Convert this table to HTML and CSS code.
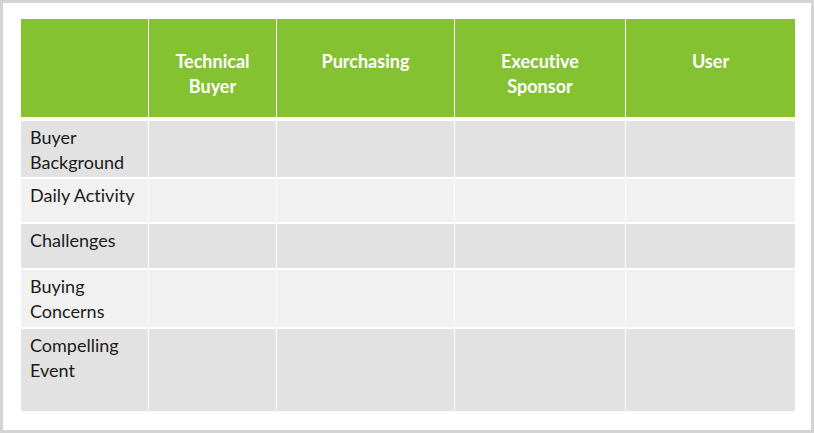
FILE: index.html
```html
<!DOCTYPE html>
<html>
<head>
<meta charset="utf-8">
<link rel="stylesheet" href="styles.css">
</head>
<body>
<div class="frame">
  <div class="table">
    <div class="row head">
      <div class="cell"></div>
      <div class="cell">Technical<br>Buyer</div>
      <div class="cell">Purchasing</div>
      <div class="cell">Executive<br>Sponsor</div>
      <div class="cell">User</div>
    </div>
    <div class="row dark r1">
      <div class="cell label">Buyer<br>Background</div>
      <div class="cell"></div><div class="cell"></div><div class="cell"></div><div class="cell"></div>
    </div>
    <div class="row light r2">
      <div class="cell label">Daily Activity</div>
      <div class="cell"></div><div class="cell"></div><div class="cell"></div><div class="cell"></div>
    </div>
    <div class="row dark r3">
      <div class="cell label">Challenges</div>
      <div class="cell"></div><div class="cell"></div><div class="cell"></div><div class="cell"></div>
    </div>
    <div class="row light r4">
      <div class="cell label">Buying<br>Concerns</div>
      <div class="cell"></div><div class="cell"></div><div class="cell"></div><div class="cell"></div>
    </div>
    <div class="row dark r5">
      <div class="cell label">Compelling<br>Event</div>
      <div class="cell"></div><div class="cell"></div><div class="cell"></div><div class="cell"></div>
    </div>
  </div>
</div>
</body>
</html>
```
FILE: styles.css
```css
html, body {
  margin: 0;
  padding: 0;
  background: #ffffff;
}
.frame {
  box-sizing: border-box;
  width: 814px;
  height: 433px;
  border: 3px solid #d4d4d4;
  padding: 16px 0 0 18px;
  background: #ffffff;
}
.table {
  display: flex;
  flex-direction: column;
  gap: 2px;
  width: 774px;
  font-family: Lato, "Open Sans", sans-serif;
  font-size: 18px;
  line-height: 25px;
  font-variant-ligatures: none;
}
.row {
  display: grid;
  grid-template-columns: 127px 127px 177px 170px 169px;
  column-gap: 1px;
}
.head {
  height: 98px;
  margin-bottom: 2px;
}
.head .cell {
  background: #84c232;
  color: #ffffff;
  font-weight: bold;
  text-align: center;
  padding-top: 30px;
}
.dark .cell { background: #e2e2e2; }
.light .cell { background: #f1f1f1; }
.label {
  color: #1a1a1a;
  padding: 4px 0 0 9px;
}
.r1 { height: 56px; }
.r2 { height: 43px; }
.r3 { height: 44px; }
.r4 { height: 57px; }
.r5 { height: 82px; }
```
